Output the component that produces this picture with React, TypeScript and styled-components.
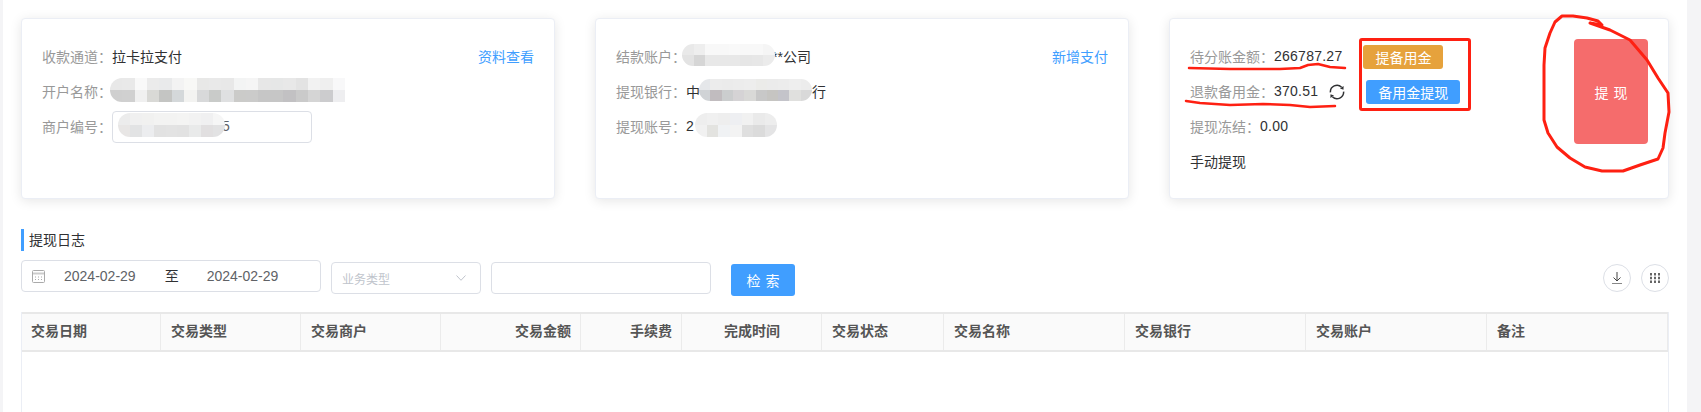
import React from "react";
import styled, {createGlobalStyle} from "styled-components";

const GlobalStyle = createGlobalStyle`
  html, body {
    margin: 0;
    height: 100%;
    overflow: hidden;
    background: #f4f4f6;
    font-family: "Liberation Sans", "Noto Sans CJK SC", sans-serif;
    font-size: 14px;
    color: #303133;
  }
`;

const Panel = styled.div`
  position: relative;
  box-sizing: border-box;
  width: 1684px;
  height: 412px;
  margin-left: 3px;
  padding: 18px 18px 0 18px;
  background: #fff;
  overflow: hidden;
`;

const CardRow = styled.div`
  display: flex;
  justify-content: space-between;
`;

const Card = styled.div<{ $width: number }>`
  box-sizing: border-box;
  display: flex;
  justify-content: space-between;
  align-items: flex-start;
  width: ${props => props.$width}px;
  height: 181px;
  padding: 20px;
  background: #fff;
  border: 1px solid #ebeef5;
  border-radius: 4px;
  box-shadow: 0 2px 12px rgba(0, 0, 0, .1);
`;

const Rows = styled.div`
  flex: 1;
`;

const Row = styled.div`
  display: flex;
  align-items: center;
  height: 35px;
  white-space: nowrap;
`;

const Label = styled.span`
  margin-bottom: 2px;
  color: #999;
`;

const Value = styled.span`
  margin-bottom: 2px;
  color: #303133;
`;

const Amount = styled(Value)`
  letter-spacing: .25px;
`;

const LinkText = styled.a`
  margin-left: auto;
  margin-bottom: 2px;
  color: #409eff;
  cursor: pointer;
`;

const Mosaic = styled.span<{ $cols: number; $gap: number; $width: number; $height: number; $square?: boolean }>`
  position: relative;
  z-index: 1;
  display: inline-grid;
  flex: none;
  grid-template-columns: repeat(${props => props.$cols}, 1fr);
  grid-auto-rows: 1fr;
  width: ${props => props.$width}px;
  height: ${props => props.$height}px;
  margin: 0 0 4px ${props => props.$gap}px;
  overflow: hidden;
  border-radius: ${props => props.$square ? "12px 0 0 12px" : "12px"};
`;

const MosaicCell = styled.i<{ $color: string }>`
  background: ${props => props.$color};
`;

const Blur: React.FC<{ top: string[]; bottom: string[]; gap: number; width: number; height: number; square?: boolean }> =
    ({top, bottom, gap, width, height, square}) => (
        <Mosaic $cols={top.length} $gap={gap} $width={width} $height={height} $square={square}>
            {[...top, ...bottom].map((color, i) => <MosaicCell key={i} $color={"#" + color}/>)}
        </Mosaic>
    );

const MerchantBox = styled.div`
  box-sizing: border-box;
  display: flex;
  align-items: center;
  width: 200px;
  height: 32px;
  padding-left: 5px;
  border: 1px solid #dcdfe6;
  border-radius: 4px;
  overflow: hidden;
`;

const Tail = styled(Value)`
  margin-left: -3px;
`;

const MerchantTail = styled(Tail)`
  color: #606266;
`;

const FundButton = styled.button<{ $color: string }>`
  height: 24px;
  margin-left: 21px;
  padding: 0 12px;
  border: 0;
  border-radius: 3px;
  background: ${props => props.$color};
  color: #fff;
  font: inherit;
  white-space: nowrap;
`;

const RefreshIcon = styled.svg`
  width: 16px;
  height: 16px;
  margin-left: 11px;
`;

const WithdrawButton = styled.button`
  flex: none;
  width: 74px;
  height: 105px;
  border: 0;
  border-radius: 4px;
  background: #f56c6c;
  color: #fff;
  font: inherit;
  word-spacing: 1px;
`;

const LogTitle = styled.h3`
  margin: 30px 0 9px;
  padding-left: 5px;
  height: 22px;
  line-height: 22px;
  border-left: 3px solid #409eff;
  color: #303133;
  font-size: 14px;
  font-weight: 400;
`;

const Toolbar = styled.div`
  display: flex;
  align-items: flex-start;
  height: 36px;
  margin-bottom: 16px;
`;

const Field = styled.div<{ $width: number; $top: number; $left: number }>`
  box-sizing: border-box;
  display: flex;
  align-items: center;
  width: ${props => props.$width}px;
  height: 32px;
  margin-top: ${props => props.$top}px;
  margin-left: ${props => props.$left}px;
  border: 1px solid #dcdfe6;
  border-radius: 4px;
`;

const DateField = styled(Field)`
  padding-left: 10px;
  color: #606266;
`;

const DateText = styled.span`
  margin-left: 19px;
`;

const RangeSep = styled.span`
  margin: 0 28px 2px 29px;
  color: #303133;
`;

const SelectField = styled(Field)`
  justify-content: space-between;
  padding: 0 14px 0 10px;
  color: #c0c4cc;
  font-size: 12px;
`;

const SearchButton = styled.button`
  width: 64px;
  height: 32px;
  margin-top: 4px;
  margin-left: 20px;
  border: 0;
  border-radius: 3px;
  background: #409eff;
  color: #fff;
  font: inherit;
  word-spacing: 1px;
`;

const RoundButton = styled.button<{ $auto?: boolean }>`
  display: flex;
  align-items: center;
  justify-content: center;
  box-sizing: border-box;
  width: 28px;
  height: 28px;
  margin-top: 4px;
  margin-left: ${props => props.$auto ? "auto" : "10px"};
  padding: 0;
  border: 1px solid #dcdfe6;
  border-radius: 50%;
  background: #fff;
  color: #555;
`;

const TableBox = styled.div`
  height: 120px;
  border-left: 1px solid #ebeef5;
  border-right: 1px solid #ebeef5;
`;

const HeaderRow = styled.div`
  display: grid;
  grid-template-columns: 139px 140px 140px 140px 101px 140px 122px 181px 181px 181px 1fr;
  height: 40px;
  background: #fafafa;
  border-top: 2px solid #e8e8e8;
  border-bottom: 2px solid #e8e8e8;
  box-sizing: border-box;
`;

const HeaderCell = styled.div<{ $align?: string }>`
  padding: 0 9px 1px 10px;
  border-right: 1px solid #ebebeb;
  color: #555;
  font-weight: 700;
  line-height: 34px;
  text-align: ${props => props.$align || "left"};

  &:first-child {
    padding-left: 9px;
  }
`;

const Annotations = styled.svg`
  position: absolute;
  top: 0;
  left: -3px;
  width: 1701px;
  height: 412px;
  pointer-events: none;
  fill: none;
  stroke: #fe2012;
  stroke-linecap: round;
  stroke-linejoin: round;
`;

const columns: { title: string; align?: string }[] = [
    {title: "交易日期"},
    {title: "交易类型"},
    {title: "交易商户"},
    {title: "交易金额", align: "right"},
    {title: "手续费", align: "right"},
    {title: "完成时间", align: "center"},
    {title: "交易状态"},
    {title: "交易名称"},
    {title: "交易银行"},
    {title: "交易账户"},
    {title: "备注"},
];

const scribble = "M1590 23 L1602 25 L1598 21 L1587 18 L1573 16 L1562 16 L1555 22 L1550 33 L1545 48 L1544 65 L1544 92 L1544 120 L1548 133 L1557 147 L1570 158 L1585 167 L1602 171 L1623 171 L1640 165 L1658 159 L1663 148 L1665 133 L1669 112 L1668 93 L1658 78 L1647 60 L1630 40 L1610 30 Z";

const App: React.FC = () => {
    return (
        <Panel>
            <GlobalStyle/>
            <CardRow>
                <Card $width={534}>
                    <Rows>
                        <Row>
                            <Label>收款通道：</Label>
                            <Value>拉卡拉支付</Value>
                            <LinkText>资料查看</LinkText>
                        </Row>
                        <Row>
                            <Label>开户名称：</Label>
                            <Blur gap={-2} width={235} height={24} square
                                  top={["e8e8e8", "e9e9e9", "f9f9f9", "ebebeb", "e9eaeb", "f3f3f3", "f8f8f6", "e8e8e7", "e9e9e9", "e8e8e8", "f3f4f4", "f5f5f5", "e7e7e7", "e6e7e7", "e8e8e8", "e3e3e3", "f2f2f2", "efefef", "f8f8f9"]}
                                  bottom={["cfcfcf", "d0d0d0", "f0f0f0", "d9d9d6", "c4c5c3", "d4d8da", "f3f3f1", "d8d9da", "c9cbc9", "dfe0e1", "cbcbc9", "cbcbca", "c6c6c6", "c6c6c6", "c2c1c3", "cacaca", "d5d5d5", "ccccce", "eeeef0"]}/>
                        </Row>
                        <Row>
                            <Label>商户编号：</Label>
                            <MerchantBox>
                                <Blur gap={0} width={107} height={24}
                                      top={["ececec", "f0f0f0", "f1f1f0", "f3f3f2", "f3f3f2", "f4f4f3", "f2f2f2", "f0f0f1", "f6f6f6"]}
                                      bottom={["e8e6e5", "e2e3e4", "ecedef", "e2e2e2", "e3e3e3", "e2e2e2", "e9eaea", "e1dfe0", "e2e2e3"]}/>
                                <MerchantTail>5</MerchantTail>
                            </MerchantBox>
                        </Row>
                    </Rows>
                </Card>
                <Card $width={534}>
                    <Rows>
                        <Row>
                            <Label>结款账户：</Label>
                            <Blur gap={-4} width={93} height={22}
                                  top={["e9e9e9", "eeeeee", "f8f8f8", "f8f8f8", "f9f9f9", "f8f8f8", "f8f8f8", "f5f5f5"]}
                                  bottom={["e3e3e3", "d6d6d6", "e8e8e8", "e8e8e8", "e8e8e8", "e6e6e6", "e7e7e7", "ebebeb"]}/>
                            <Tail>**公司</Tail>
                            <LinkText>新增支付</LinkText>
                        </Row>
                        <Row>
                            <Label>提现银行：</Label>
                            <Value>中</Value>
                            <Blur gap={-1} width={113} height={22}
                                  top={["e5e7ea", "ececec", "ebebeb", "ececec", "ededed", "ebebe9", "ebebeb", "ececec", "eeeeee", "ececec"]}
                                  bottom={["d0d3d6", "c1bcbf", "cbcdce", "d5d3d5", "d9d9d7", "c8c8c8", "c6c5c2", "c4c4ca", "e0e0de", "d9d9d9"]}/>
                            <Value>行</Value>
                        </Row>
                        <Row>
                            <Label>提现账号：</Label>
                            <Value>2</Value>
                            <Blur gap={1} width={82} height={24}
                                  top={["eeeeee", "f0f0f0", "eeeeee", "eeeff2", "f1f1f1", "eaeaea", "ededed"]}
                                  bottom={["f1f1f1", "e3e3e0", "f0f2f4", "f3f3f3", "dfdfdf", "dbdbdb", "e4e4e5"]}/>
                        </Row>
                    </Rows>
                </Card>
                <Card $width={500}>
                    <Rows>
                        <Row>
                            <Label>待分账金额：</Label>
                            <Amount>266787.27</Amount>
                            <FundButton $color="#e6a23c">提备用金</FundButton>
                        </Row>
                        <Row>
                            <Label>退款备用金：</Label>
                            <Amount>370.51</Amount>
                            <RefreshIcon viewBox="0 0 16 16" fill="none" stroke="#303133" strokeWidth="1.5">
                                <path d="M1.4 8.4A6.6 6.6 0 0 1 12.6 3.2"/>
                                <path d="M14.6 7.6A6.6 6.6 0 0 1 3.4 12.8"/>
                                <path d="M14.6 2 14.5 5.8 11 4.6Z" fill="#303133" stroke="none"/>
                                <path d="M1.4 14 1.5 10.2 5 11.4Z" fill="#303133" stroke="none"/>
                            </RefreshIcon>
                            <FundButton $color="#409eff">备用金提现</FundButton>
                        </Row>
                        <Row>
                            <Label>提现冻结：</Label>
                            <Amount>0.00</Amount>
                        </Row>
                        <Row>
                            <Value>手动提现</Value>
                        </Row>
                    </Rows>
                    <WithdrawButton>提 现</WithdrawButton>
                </Card>
            </CardRow>
            <LogTitle>提现日志</LogTitle>
            <Toolbar>
                <DateField $width={300} $top={0} $left={0}>
                    <svg width="13" height="13" viewBox="0 0 13 13" fill="none" stroke="#aaa">
                        <rect x="0.5" y="0.5" width="12" height="12" rx="1"/>
                        <path d="M1 3.5h11" strokeWidth="2" stroke="#ccc"/>
                        <path d="M3 7h1M6 7h1M9 7h1M3 9.5h1M6 9.5h1M9 9.5h1"/>
                    </svg>
                    <DateText>2024-02-29</DateText>
                    <RangeSep>至</RangeSep>
                    <span>2024-02-29</span>
                </DateField>
                <SelectField $width={150} $top={2} $left={10}>
                    业务类型
                    <svg width="10" height="6" viewBox="0 0 10 6" fill="none" stroke="#c0c4cc">
                        <path d="M.5.5 5 5.3 9.5.5"/>
                    </svg>
                </SelectField>
                <Field $width={220} $top={2} $left={10}/>
                <SearchButton>检 索</SearchButton>
                <RoundButton $auto>
                    <svg width="12" height="14" viewBox="0 0 12 14" fill="none" stroke="#444">
                        <path d="M6 1v9M2.5 6.5 6 10l3.5-3.5"/>
                        <path d="M1 12.5h10" stroke="#888"/>
                    </svg>
                </RoundButton>
                <RoundButton>
                    <svg width="12" height="12" viewBox="0 0 12 12" fill="#666">
                        <path d="M1 1h2v2.5H1zM5 1h2v2.5H5zM9 1h2v2.5H9zM1 4.8h2v2.5H1zM5 4.8h2v2.5H5zM9 4.8h2v2.5H9zM1 8.6h2v2.5H1zM5 8.6h2v2.5H5zM9 8.6h2v2.5H9z"/>
                    </svg>
                </RoundButton>
            </Toolbar>
            <TableBox>
                <HeaderRow>
                    {columns.map(col => (
                        <HeaderCell key={col.title} $align={col.align}>{col.title}</HeaderCell>
                    ))}
                </HeaderRow>
            </TableBox>
            <Annotations viewBox="0 0 1701 412">
                <path strokeWidth="2.5" d="M1189 68 L1230 69 L1280 69 L1300 68 L1308 65 L1318 64 L1330 67 L1345 68"/>
                <path strokeWidth="2.5" d="M1186 101 L1200 103 L1230 105 L1263 104 L1290 105 L1310 107 L1335 106"/>
                <rect x="1360.5" y="39.5" width="109" height="70" rx="1.5" strokeWidth="3"/>
                <path strokeWidth="3" d={scribble}/>
            </Annotations>
        </Panel>
    );
};

export default App;
